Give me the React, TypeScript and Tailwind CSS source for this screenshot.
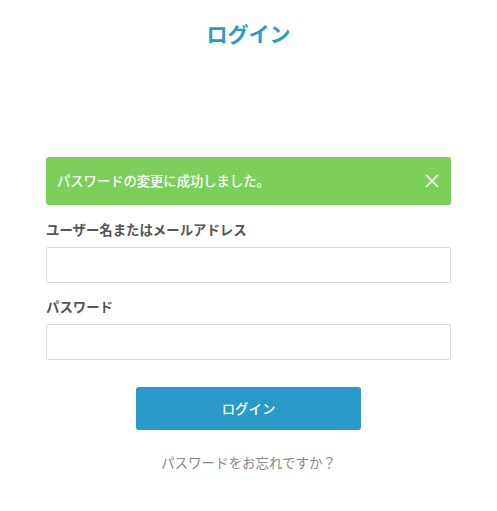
export default function App() {
  return (
    <div
      className="min-h-screen bg-white"
      style={{ fontFamily: '"Noto Sans CJK JP", "Noto Sans", sans-serif' }}
    >
      <div className="mx-auto w-[405px] pt-[17px]">
        <h1 className="text-center text-[21px] font-bold leading-[32px] text-[#2a9ac8]">ログイン</h1>

        <div className="mt-[108px] flex h-[48px] items-center justify-between rounded-[3px] bg-[#7bcf5a] pl-[11px] pr-[12px]">
          <span className="text-[13.3px] font-medium text-white">パスワードの変更に成功しました。</span>
          <svg width="14" height="14" viewBox="0 0 14 14" className="text-white">
            <path d="M1 1 L13 13 M13 1 L1 13" stroke="currentColor" strokeWidth="1.6" fill="none" />
          </svg>
        </div>

        <form className="mt-[14px]">
          <label className="block text-[13.4px] font-bold leading-[20px] text-[#555]">
            ユーザー名またはメールアドレス
          </label>
          <input
            type="text"
            className="mt-[8px] block h-[36px] w-full rounded-[2px] border border-[#dcdcdc] px-3 outline-none"
          />

          <label className="mt-[13px] block text-[13.4px] font-bold leading-[20px] text-[#555]">
            パスワード
          </label>
          <input
            type="password"
            className="mt-[8px] block h-[36px] w-full rounded-[2px] border border-[#dcdcdc] px-3 outline-none"
          />

          <div className="mt-[27px] flex justify-center">
            <button
              type="button"
              className="h-[43px] w-[225px] rounded-[3px] bg-[#2899c8] text-[13.4px] font-medium text-white"
            >
              ログイン
            </button>
          </div>

          <p className="mt-[22px] text-center text-[13.5px] text-[#888]">パスワードをお忘れですか？</p>
        </form>
      </div>
    </div>
  );
}
